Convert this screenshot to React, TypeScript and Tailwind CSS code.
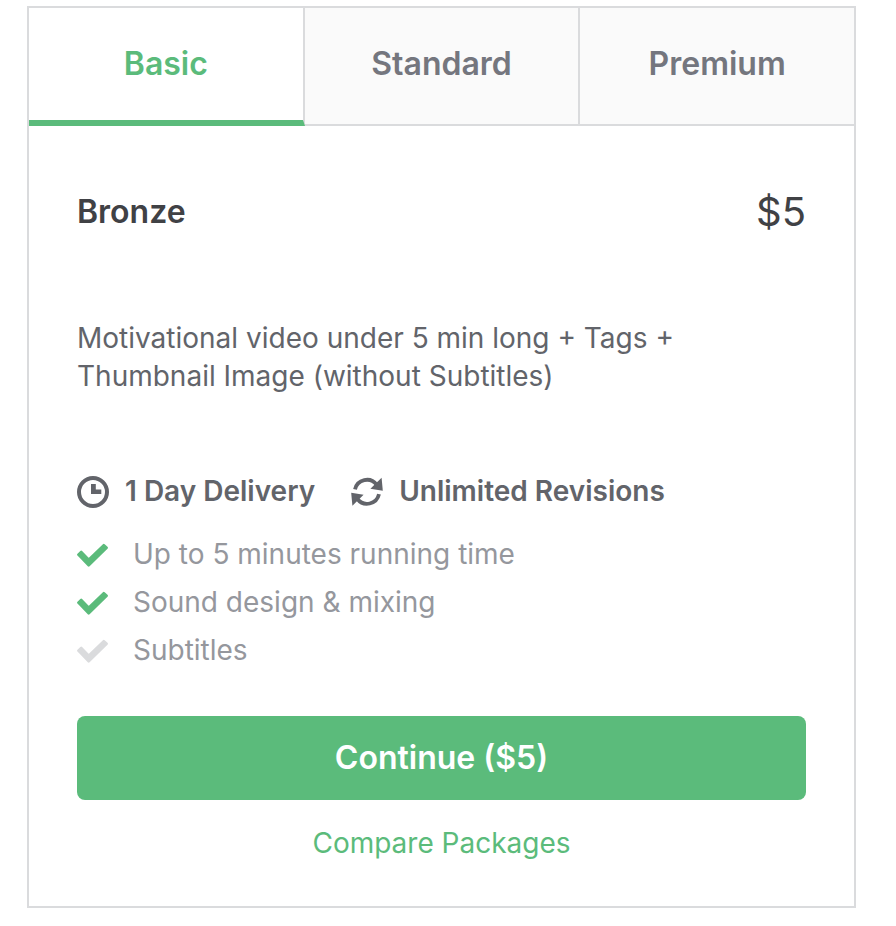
import { useState } from "react";

const tabs = ["Basic", "Standard", "Premium"];

const features = [
  { label: "Up to 5 minutes running time", included: true },
  { label: "Sound design & mixing", included: true },
  { label: "Subtitles", included: false },
];

function ClockIcon() {
  return (
    <svg viewBox="0 -2 32 34" className="h-[34px] w-8 shrink-0" aria-hidden="true">
      <circle cx="16" cy="16" r="14" fill="none" stroke="currentColor" strokeWidth="4" />
      <path d="M14 8h4.8v5.5h5.5V18H14z" fill="currentColor" />
    </svg>
  );
}

function RefreshIcon() {
  return (
    <svg viewBox="0 -2 32 34" className="h-[34px] w-8 shrink-0" aria-hidden="true">
      <g fill="none" stroke="currentColor" strokeWidth="3.8">
        <path d="M4 13.4A12.2 12.2 0 0 1 25.6 8.6" />
        <path d="M28 18.2A12.2 12.2 0 0 1 6.4 23" />
      </g>
      <path d="M30.6 1.8L31.8 14.8L19.4 12.8z" fill="currentColor" />
      <path d="M1.4 29.8L0.2 16.8L12.6 18.8z" fill="currentColor" />
    </svg>
  );
}

function CheckIcon({ className }: { className: string }) {
  return (
    <svg viewBox="0 -2 32 26" className={`h-[26px] w-8 shrink-0 ${className}`} aria-hidden="true">
      <path
        d="M1.4 11.7L4.2 9L11.7 16.6L26.8 2.1L29.6 4.8L11.7 22.4z"
        fill="currentColor"
        stroke="currentColor"
        strokeWidth="2.6"
        strokeLinejoin="round"
      />
    </svg>
  );
}

export default function App() {
  const [active, setActive] = useState("Basic");

  return (
    <main className="bg-white pt-1.5 pr-10 pb-4 pl-[27px] font-['Inter','Liberation_Sans',sans-serif] text-[28px] leading-[38px] text-[#62646a]">
      <section className="border-2 border-[#dadbdd]">
        <div role="tablist" className="flex text-[32px] leading-10 font-semibold">
          {tabs.map((tab) => (
            <button
              key={tab}
              type="button"
              role="tab"
              aria-selected={tab === active}
              onClick={() => setActive(tab)}
              className={`flex-1 border-r-2 border-r-[#dadbdd] pt-9 last:border-r-0 ${
                tab === active
                  ? "border-b-6 border-b-[#5bbb7b] bg-white pb-9 text-[#5bbb7b]"
                  : "border-b-2 border-b-[#dadbdd] bg-[#fafafa] pb-10 text-[#74767e]"
              }`}
            >
              {tab}
            </button>
          ))}
        </div>

        <div className="px-12 pt-[62px] pb-11">
          <header className="flex items-center justify-between leading-12 text-[#404145]">
            <h2 className="text-[32px] font-semibold">Bronze</h2>
            <span className="text-[40px]">$5</span>
          </header>

          <p className="mt-[83px] max-w-[640px]">
            Motivational video under 5 min long + Tags + Thumbnail Image (without Subtitles)
          </p>

          <div className="mt-[79px] flex items-center gap-9 leading-8 font-semibold">
            <div className="flex items-center gap-4">
              <ClockIcon />
              <span>1 Day Delivery</span>
            </div>
            <div className="flex items-center gap-4">
              <RefreshIcon />
              <span>Unlimited Revisions</span>
            </div>
          </div>

          <ul className="mt-[22px] leading-12 text-[#95979d]">
            {features.map(({ label, included }) => (
              <li key={label} className="flex items-center gap-6">
                <CheckIcon className={included ? "text-[#5bbb7b]" : "text-[#dadbdd]"} />
                {label}
              </li>
            ))}
          </ul>

          <button
            type="button"
            className="mt-[42px] h-[84px] w-full rounded-lg bg-[#5bbb7b] text-[32px] font-semibold text-white"
          >
            Continue ($5)
          </button>
          <div className="mt-6 text-center">
            <a href="#compare" className="text-[#5bbb7b]">
              Compare Packages
            </a>
          </div>
        </div>
      </section>
    </main>
  );
}
